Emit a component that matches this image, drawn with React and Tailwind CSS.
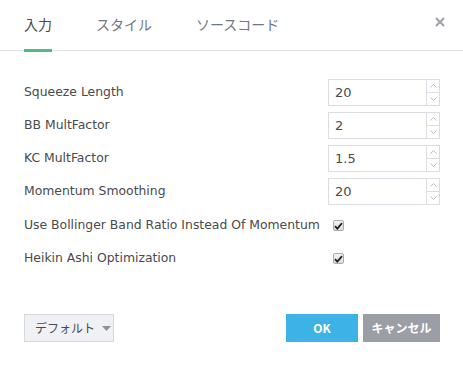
import { useState } from "react";

const numberFields = [
  { label: "Squeeze Length", value: "20" },
  { label: "BB MultFactor", value: "2" },
  { label: "KC MultFactor", value: "1.5" },
  { label: "Momentum Smoothing", value: "20" },
];

const checkFields = [
  { label: "Use Bollinger Band Ratio Instead Of Momentum", checked: true },
  { label: "Heikin Ashi Optimization", checked: true },
];

function Spinner() {
  return (
    <div className="flex w-[13px] flex-col border-l border-[#dadde3]">
      <div className="flex flex-1 items-center justify-center border-b border-[#dadde3]">
        <svg width="7" height="4" viewBox="0 0 7 4" fill="none" stroke="#b8bcc4" strokeWidth="1">
          <path d="M0.5 3.5 L3.5 0.5 L6.5 3.5" />
        </svg>
      </div>
      <div className="flex flex-1 items-center justify-center">
        <svg width="7" height="4" viewBox="0 0 7 4" fill="none" stroke="#b8bcc4" strokeWidth="1">
          <path d="M0.5 0.5 L3.5 3.5 L6.5 0.5" />
        </svg>
      </div>
    </div>
  );
}

function CheckBox({ checked }) {
  return (
    <span className="flex h-[11px] w-[11px] items-center justify-center rounded-[2px] border border-[#a9abb0] bg-gradient-to-b from-[#f4f4f4] to-[#dcdcdc]">
      {checked && (
        <svg width="9" height="8" viewBox="0 0 9 8">
          <path d="M1 4.2 L3.3 6.6 L8 1.2" fill="none" stroke="#222" strokeWidth="1.8" />
        </svg>
      )}
    </span>
  );
}

export default function App() {
  const [tab, setTab] = useState(0);
  const tabs = ["入力", "スタイル", "ソースコード"];

  return (
    <div className="flex h-[366px] w-[463px] flex-col bg-white font-['DejaVu_Sans','Noto_Sans_CJK_JP',sans-serif] text-[#4a4a4a]">
      <div className="relative flex h-[51px] items-start gap-[44px] border-b border-[#e0e3eb] pl-6">
        {tabs.map((t, i) => (
          <button
            key={t}
            onClick={() => setTab(i)}
            className={`relative pt-[14px] font-['Noto_Sans_CJK_JP',sans-serif] text-[14px] leading-[20px] ${
              tab === i ? "text-[#4a4a4a]" : "text-[#737680]"
            }`}
          >
            {t}
            {tab === i && (
              <span className="absolute bottom-[-18px] left-0 h-[3px] w-full bg-[#53b987]" />
            )}
          </button>
        ))}
        <button className="absolute right-[18px] top-[17px] text-[#9ea0a6]">
          <svg width="10" height="10" viewBox="0 0 10 10" stroke="currentColor" strokeWidth="2">
            <path d="M1 1 L9 9 M9 1 L1 9" />
          </svg>
        </button>
      </div>

      <div className="flex flex-col gap-[6px] pl-6 pr-[23px] pt-[28px]">
        {numberFields.map((f) => (
          <div key={f.label} className="flex h-[27px] items-center justify-between">
            <span className="text-[12.4px]">{f.label}</span>
            <div className="flex h-[27px] w-[112px] border border-[#dadde3]">
              <input
                className="w-0 flex-1 pl-[6px] text-[13px] text-[#4a4a4a] outline-none"
                defaultValue={f.value}
              />
              <Spinner />
            </div>
          </div>
        ))}
        {checkFields.map((f, i) => (
          <div key={f.label} className={`flex h-[27px] items-center ${i === 0 ? "mt-[1px]" : ""}`}>
            <span className="w-[309px] text-[12.4px]">{f.label}</span>
            <CheckBox checked={f.checked} />
          </div>
        ))}
      </div>

      <div className="mt-auto flex items-center justify-between pb-[24px] pl-6 pr-[23px]">
        <button className="flex h-[28px] w-[90px] items-center gap-[7px] whitespace-nowrap border border-[#d6d8de] bg-[#f0f1f5] pl-[10px] font-['Noto_Sans_CJK_JP',sans-serif] text-[12px] text-[#4a4a4a]">
          デフォルト
          <svg width="9" height="5" viewBox="0 0 9 5">
            <path d="M0 0 L9 0 L4.5 5 Z" fill="#8e9096" />
          </svg>
        </button>
        <div className="flex gap-[5px]">
          <button className="h-[28px] w-[72px] bg-[#3db3e5] font-['Noto_Sans_CJK_JP',sans-serif] text-[12px] font-bold text-white">
            OK
          </button>
          <button className="h-[28px] w-[77px] whitespace-nowrap bg-[#9c9ea5] font-['Noto_Sans_CJK_JP',sans-serif] text-[12px] font-bold text-white">
            キャンセル
          </button>
        </div>
      </div>
    </div>
  );
}
